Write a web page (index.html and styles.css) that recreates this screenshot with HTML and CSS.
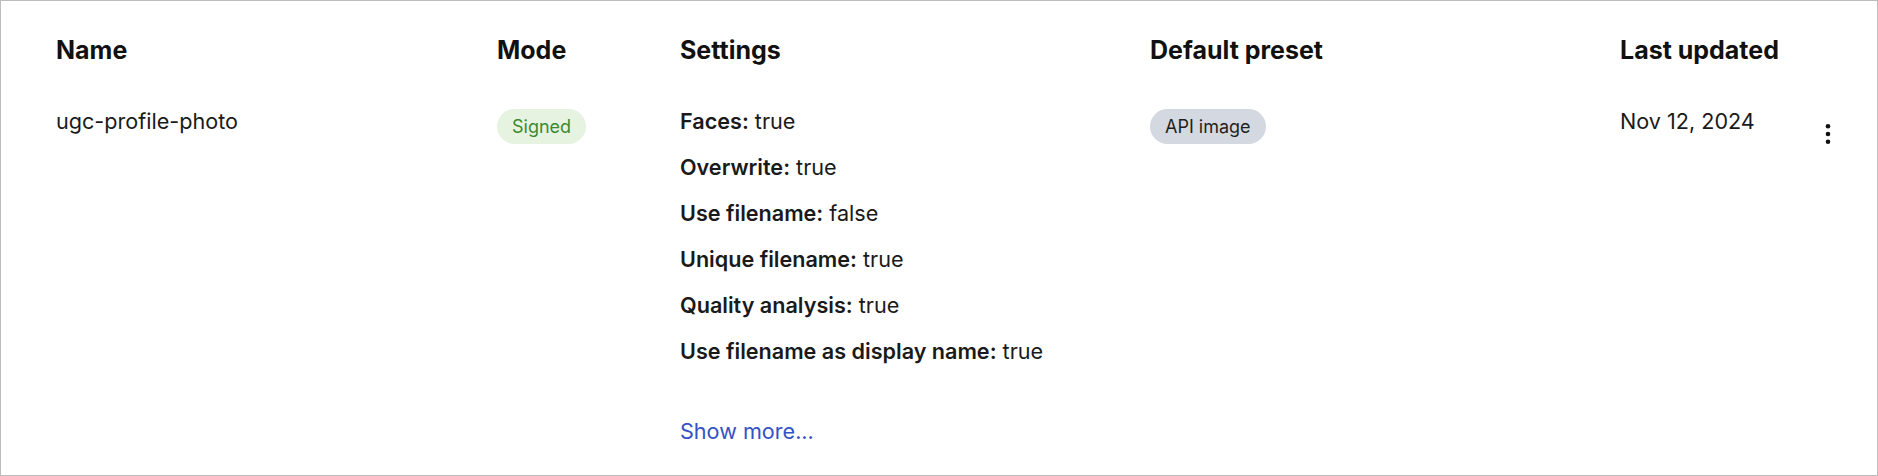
FILE: index.html
```html
<!DOCTYPE html>
<html lang="en">
<head>
<meta charset="utf-8">
<title>Upload presets</title>
<link rel="stylesheet" href="styles.css">
</head>
<body>
<div class="card">
  <div class="row head">
    <div class="th">Name</div>
    <div class="th">Mode</div>
    <div class="th">Settings</div>
    <div class="th">Default preset</div>
    <div class="th">Last updated</div>
    <div></div>
  </div>
  <div class="row data">
    <div class="td">ugc-profile-photo</div>
    <div class="td"><span class="pill pill-green">Signed</span></div>
    <div class="td settings">
      <div class="setting"><b>Faces:</b> true</div>
      <div class="setting"><b>Overwrite:</b> true</div>
      <div class="setting"><b>Use filename:</b> false</div>
      <div class="setting"><b>Unique filename:</b> true</div>
      <div class="setting"><b>Quality analysis:</b> true</div>
      <div class="setting"><b>Use filename as display name:</b> true</div>
      <a class="more" href="#">Show more...</a>
    </div>
    <div class="td"><span class="pill pill-gray">API image</span></div>
    <div class="td">Nov 12, 2024</div>
    <div class="td kebab">
      <svg width="24" height="24" viewBox="0 0 24 24" aria-hidden="true">
        <circle cx="12" cy="4.2" r="2.3" fill="#111"/>
        <circle cx="12" cy="12" r="2.3" fill="#111"/>
        <circle cx="12" cy="19.8" r="2.3" fill="#111"/>
      </svg>
    </div>
  </div>
</div>
</body>
</html>
```
FILE: styles.css
```css
html, body {
  margin: 0;
  padding: 0;
  background: #fff;
}
body {
  font-family: Inter, "Noto Sans", sans-serif;
  color: #1a1a1a;
}
.card {
  box-sizing: border-box;
  width: 1878px;
  height: 476px;
  border: 1px solid #bdbdbd;
  padding: 33px 37px 0 55px;
}
.row {
  display: grid;
  grid-template-columns: 441px 183px 470px 470px 1fr 24px;
}
.th {
  font-size: 25px;
  font-weight: 700;
  line-height: 32px;
  color: #111;
}
.data {
  margin-top: 38.5px;
  align-items: start;
}
.td {
  font-size: 21.6px;
  line-height: 32px;
}
.settings {
  display: flex;
  flex-direction: column;
  gap: 14.2px;
  align-items: flex-start;
}
.setting b {
  font-weight: 600;
}
.more {
  margin-top: 33px;
  color: #3551c6;
  text-decoration: none;
}
.pill {
  display: inline-flex;
  align-items: center;
  height: 35px;
  padding: 0 15px;
  margin-top: 4.5px;
  border-radius: 18px;
  font-size: 18px;
  line-height: 35px;
  vertical-align: top;
}
.pill-green {
  background: #e6f3e1;
  color: #3b8a33;
}
.pill-gray {
  background: #d4d8e0;
  color: #1f1f1f;
}
.kebab {
  display: flex;
  justify-content: center;
  padding-top: 17px;
}
.kebab svg {
  display: block;
}
```
